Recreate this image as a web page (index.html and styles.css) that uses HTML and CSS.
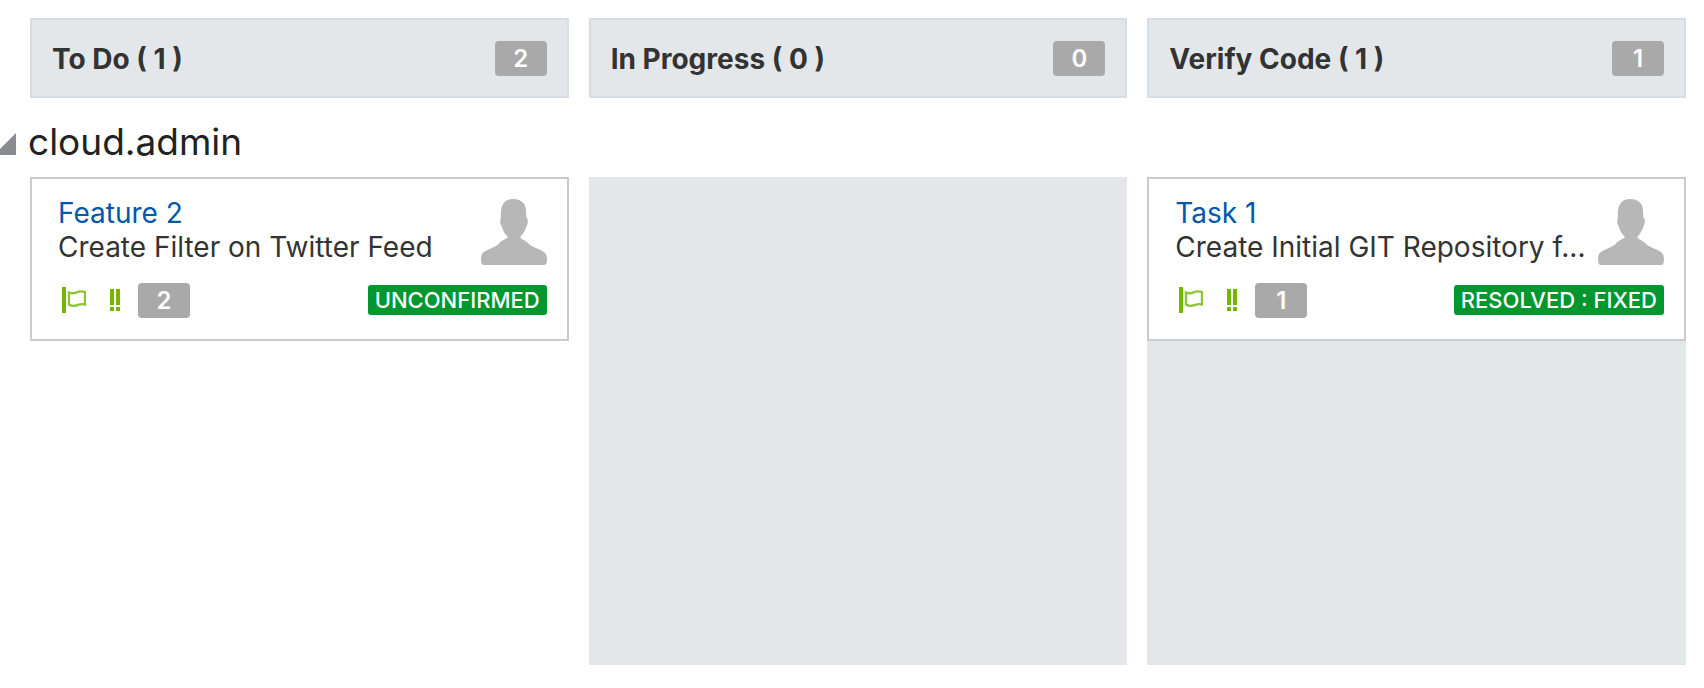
FILE: index.html
```html
<!DOCTYPE html>
<html lang="en">
<head>
<meta charset="utf-8">
<title>Board</title>
<link rel="stylesheet" href="styles.css">
</head>
<body>
<svg class="defs" aria-hidden="true">
  <symbol id="flag" viewBox="0 0 26 28">
    <path d="M2 1h4v26H2z" fill="#74b600"/>
    <path d="M9 6.500c3 1.300 5 1 7.500-.2 3-1.200 5.500-1.300 8.500-.3v12.500c-3-.9-5.500-.2-8.500.8-3 1-5 .9-7.500-.8z" fill="none" stroke="#8fc33c" stroke-width="2.400"/>
  </symbol>
  <symbol id="priority" viewBox="0 0 12 24">
    <path d="M1 1h4v16H1zM7 1h4v16H7zM1 19h4v4H1zM7 19h4v4H7z" fill="#74b600"/>
  </symbol>
  <symbol id="person" viewBox="0 0 66 66">
    <path d="M32 0c8 0 12.500 4 13 11 .2 3 .2 6 .6 8 2 1 1.400 6-.4 9-1.200 4-3 7-5.700 9.500V39c3 2 6 3.500 8.500 6 3.500 3.500 11 5 15 8 2.500 2 3 4.500 3 8 0 3-1 5-3 5H3c-2 0-3-2-3-5 0-4 .5-6.500 3-8 4-3 11-4.500 14.500-8 2-3 5-4 9-6v-1.500c-3-3-4.500-5.500-5.500-9.500-2-3-2.500-7-1-9 0-3-.6-6 .3-9C21.500 4 25 0 32 0z" fill="#b7b7b7"/>
  </symbol>
</svg>
<main class="board">
  <div class="columns">
    <header class="column-head"><h2 class="column-title">To Do ( 1 )</h2><span class="points">2</span></header>
    <header class="column-head"><h2 class="column-title">In Progress ( 0 )</h2><span class="points">0</span></header>
    <header class="column-head"><h2 class="column-title">Verify Code ( 1 )</h2><span class="points">1</span></header>
  </div>
  <section class="lane">
    <div class="lane-head">
      <button class="toggle" type="button" aria-label="Collapse cloud.admin" aria-expanded="true">
        <svg class="toggle-icon" viewBox="0 0 16 22"><path d="M16 0v22H0v-6z" fill="#888c90"/></svg>
      </button>
      <h1 class="lane-title">cloud.admin</h1>
    </div>
    <div class="columns">
      <div class="cell">
        <article class="card">
          <div class="card-top">
            <div class="card-text">
              <a class="card-link" href="#feature-2">Feature 2</a>
              <p class="summary">Create Filter on Twitter Feed</p>
            </div>
            <svg class="avatar" role="img" aria-label="Assignee"><use href="#person"/></svg>
          </div>
          <div class="card-foot">
            <svg class="flag" role="img" aria-label="Flag"><use href="#flag"/></svg>
            <svg class="priority" role="img" aria-label="Priority"><use href="#priority"/></svg>
            <span class="points">2</span>
            <span class="status">UNCONFIRMED</span>
          </div>
        </article>
      </div>
      <div class="cell cell-shaded"></div>
      <div class="cell cell-shaded">
        <article class="card">
          <div class="card-top">
            <div class="card-text">
              <a class="card-link" href="#task-1">Task 1</a>
              <p class="summary">Create Initial GIT Repository f...</p>
            </div>
            <svg class="avatar" role="img" aria-label="Assignee"><use href="#person"/></svg>
          </div>
          <div class="card-foot">
            <svg class="flag" role="img" aria-label="Flag"><use href="#flag"/></svg>
            <svg class="priority" role="img" aria-label="Priority"><use href="#priority"/></svg>
            <span class="points">1</span>
            <span class="status">RESOLVED : FIXED</span>
          </div>
        </article>
      </div>
    </div>
  </section>
</main>
</body>
</html>
```
FILE: styles.css
```css
* { box-sizing: border-box; }
body {
  margin: 0;
  background: #fff;
  color: #333;
  font-family: Inter, "Liberation Sans", sans-serif;
  font-size: 28px;
  line-height: 34px;
}
h1, h2, p { margin: 0; }
.defs { display: none; }
.board { padding: 18px 0 23px; }
.columns {
  display: grid;
  grid-template-columns: repeat(3, minmax(0, 1fr));
  gap: 20px;
  padding: 0 18px 0 30px;
}
.column-head {
  display: flex;
  align-items: center;
  justify-content: space-between;
  height: 80px;
  padding: 0 20px;
  border: 2px solid #d5dee6;
  background: #e3e7ea;
}
.column-title { padding-top: 2px; font-size: 28px; font-weight: 700; line-height: 34px; }
.points {
  width: 52px;
  border-radius: 4px;
  background: #a9a9a9;
  color: #fff;
  font-size: 24px;
  font-weight: 600;
  line-height: 35px;
  text-align: center;
}
.lane-head {
  display: flex;
  align-items: center;
  gap: 12px;
  height: 79px;
  padding-top: 8px;
}
.toggle { display: flex; padding: 4px 0 0; border: 0; background: none; }
.toggle-icon { width: 16px; height: 22px; }
.lane-title { color: #222; font-size: 37px; font-weight: 400; line-height: 48px; }
.cell { min-height: 488px; }
.cell-shaded { background: #e3e7ea; }
.card {
  display: flex;
  flex-direction: column;
  gap: 18px;
  height: 164px;
  padding: 17px 20px 0 26px;
  border: 2px solid #c9caca;
  background: #fff;
}
.card-top { display: flex; justify-content: space-between; }
.card-text { min-width: 0; }
.card-link { color: #0058ab; text-decoration: none; }
.summary { white-space: nowrap; }
.avatar { flex: none; width: 66px; height: 66px; margin-top: 3px; }
.card-foot { display: flex; align-items: center; }
.flag { width: 26px; height: 28px; margin: 0 0 2px 2px; }
.priority { width: 12px; height: 24px; margin: 0 17px 2px 23px; }
.status {
  margin: 0 0 2px auto;
  padding: 0 7px;
  border-radius: 3px;
  background: #009630;
  color: #fff;
  font-size: 22px;
  font-weight: 500;
  line-height: 30px;
}
```
